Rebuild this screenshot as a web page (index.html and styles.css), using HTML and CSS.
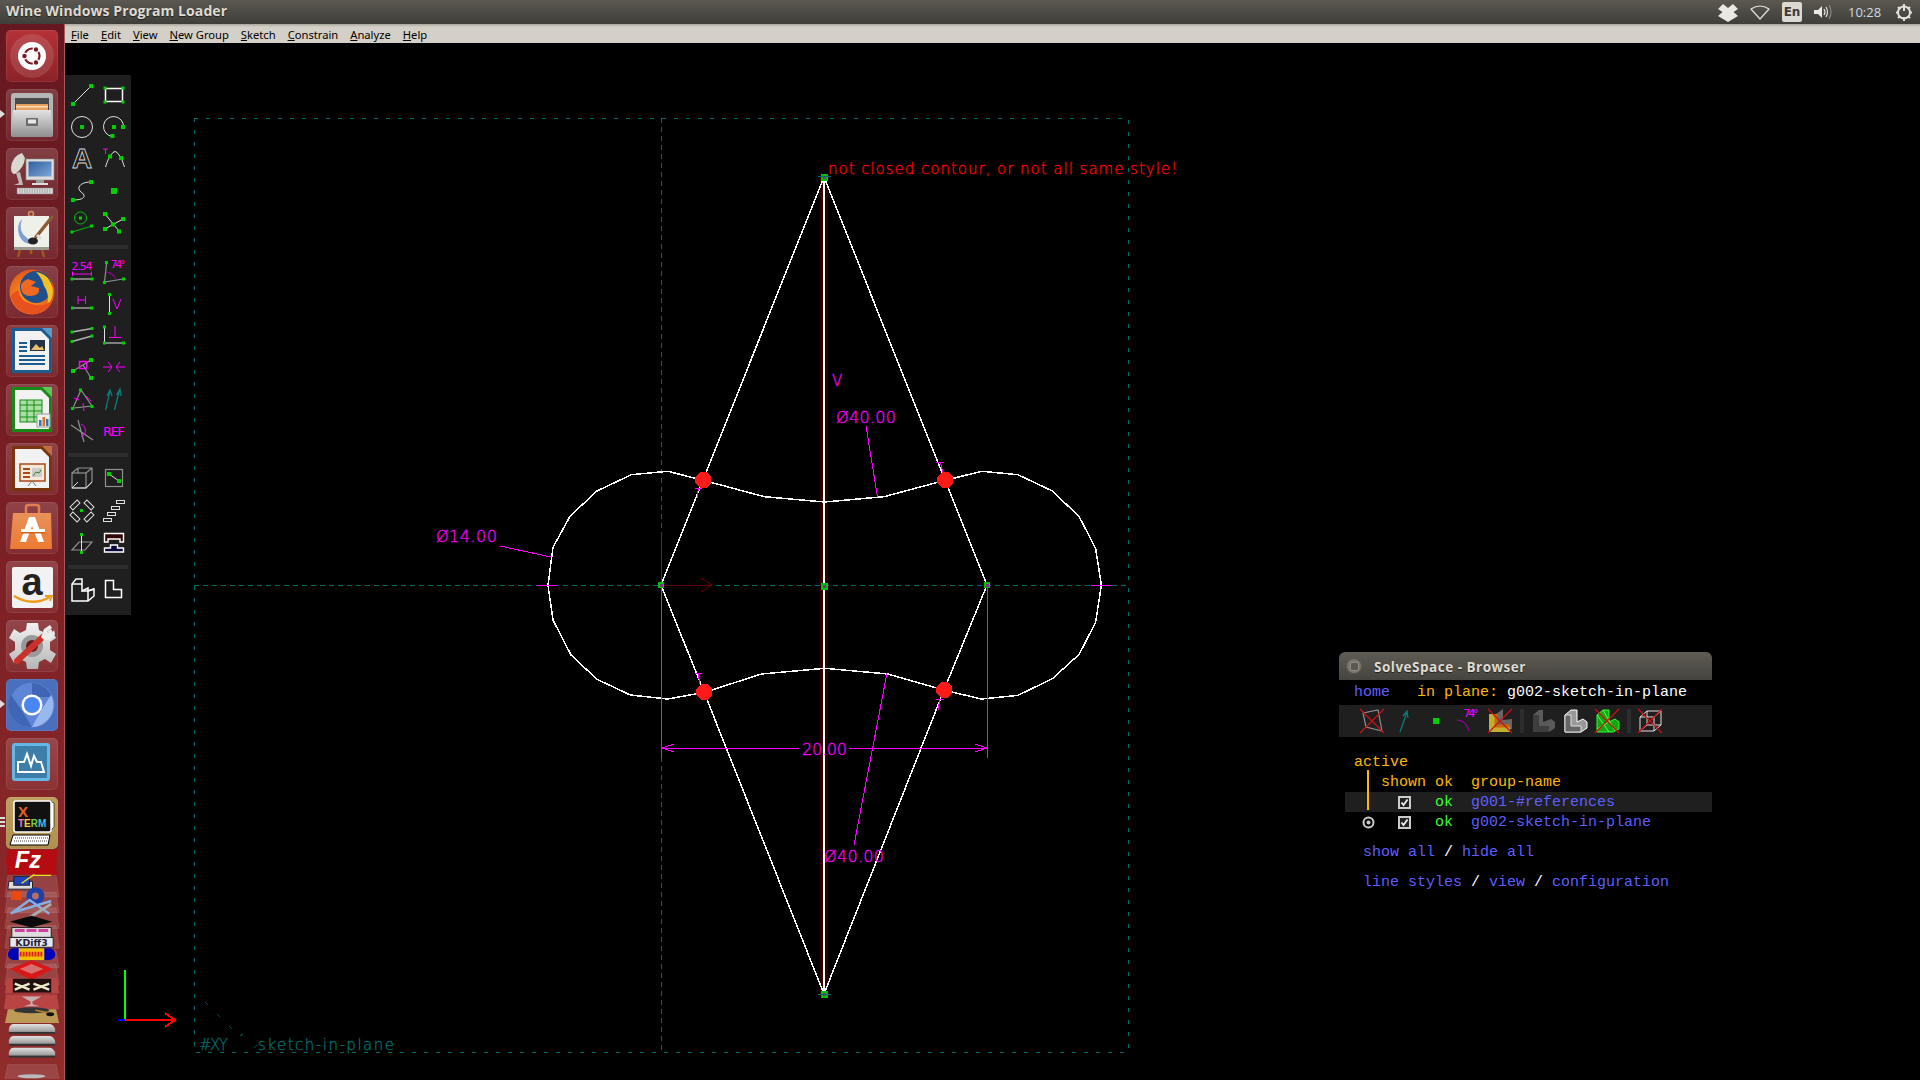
FILE: index.html
```html
<!DOCTYPE html>
<html lang="en">
<head>
<meta charset="utf-8">
<title>Wine Windows Program Loader</title>
<link rel="stylesheet" href="styles.css">
</head>
<body>
<svg class="defs" width="0" height="0" aria-hidden="true">
  <defs>
    <linearGradient id="metal" x1="0" y1="0" x2="0" y2="1"><stop offset="0" stop-color="#e2e2e2"/><stop offset="1" stop-color="#8f8f8f"/></linearGradient>
    <linearGradient id="bag" x1="0" y1="0" x2="0" y2="1"><stop offset="0" stop-color="#e8915a"/><stop offset="1" stop-color="#ee7a30"/></linearGradient>
    <linearGradient id="screen" x1="0" y1="0" x2="1" y2="1"><stop offset="0" stop-color="#2f5f9f"/><stop offset="1" stop-color="#7fa8d8"/></linearGradient>
    <linearGradient id="gear" x1="0" y1="0" x2="0" y2="1"><stop offset="0" stop-color="#f2f2f2"/><stop offset="1" stop-color="#b5b5b5"/></linearGradient>
    <radialGradient id="fox" cx=".4" cy=".6" r=".7"><stop offset="0" stop-color="#f7a020"/><stop offset="1" stop-color="#e0481c"/></radialGradient>
  </defs>
</svg>

<header class="topbar">
  <div class="wintitle">Wine Windows Program Loader</div>
  <div class="tray">
    <svg class="tray-ico" viewBox="0 0 20 20"><path class="t-fill" d="M5 2 10 6 15 2 20 7 15.500 10 20 14 15 17 10 20 5 17 0 14 4.500 10 0 7Z"/></svg>
    <svg class="tray-ico" viewBox="0 0 20 20"><path class="t-line" d="M1 7Q10 1 19 7L10 17Z"/></svg>
    <div class="lang">En</div>
    <svg class="tray-ico" viewBox="0 0 20 20"><path class="t-fill" d="M1 8H5L9 4V16L5 12H1Z"/><path class="t-line" d="M11 7Q13 10 11 13M13 5Q16 10 13 15"/><path class="t-dim" d="M16 3Q20 10 16 17"/></svg>
    <div class="clock">10:28</div>
    <svg class="tray-ico" viewBox="0 0 20 20"><circle class="t-thick" cx="10" cy="10.500" r="6"/><path class="t-thick" d="M10 2V9M10 15V19M2 10.500H5M15 10.500H18M4 5 6 7M16 5 14 7M4 16 6 14M16 16 14 14"/></svg>
  </div>
</header>

<div class="desktop">
  <nav class="launcher">
    <div class="tile tile-ubuntu">
      <svg viewBox="0 0 52 52"><circle cx="26" cy="26" r="22" class="swirl"/><circle cx="26" cy="26" r="14" fill="#fff"/><circle cx="26" cy="26" r="7.500" fill="none" stroke="#7a1a22" stroke-width="2.200"/><circle class="ub-dot" cx="18.500" cy="26" r="2.800"/><circle class="ub-dot" cx="30" cy="19.500" r="2.800"/><circle class="ub-dot" cx="30" cy="32.500" r="2.800"/></svg>
    </div>
    <div class="tile pip">
      <svg viewBox="0 0 52 52"><path d="M5 7Q5 4 8 4H44Q47 4 47 7V47H5Z" fill="#b5b5b5"/><rect x="9" y="9" width="34" height="12" fill="#4a4a4a"/><rect x="10" y="15" width="32" height="7" fill="#e8a060"/><rect x="10" y="17" width="32" height="1.500" fill="#f6e0b0"/><path d="M7 21H45L47 47Q47 48 44 48H8Q5 48 5 47Z" fill="url(#metal)"/><rect x="20" y="29" width="12" height="8" rx="1" fill="#6a6a6a"/><rect x="22" y="30.500" width="8" height="4" fill="#e8e8e8"/></svg>
    </div>
    <div class="tile">
      <svg viewBox="0 0 52 52"><rect x="20" y="11" width="28" height="21" fill="#dcdcdc" stroke="#888" stroke-width=".6"/><rect x="22.500" y="13.500" width="23" height="15" fill="url(#screen)"/><rect x="30" y="32" width="8" height="3" fill="#999"/><rect x="26" y="35" width="16" height="2" fill="#ddd"/><path d="M16 5Q6 8 5 20 5 26 9 26 18 20 19 10Z" fill="#d8d8d0"/><path d="M10 25 13 35 8 37H17L14 24Z" fill="#bbb"/><rect x="11" y="40" width="36" height="6" fill="#ddd" stroke="#777" stroke-width=".6"/><path d="M13 42H45M13 44H45" stroke="#777" stroke-width=".8" stroke-dasharray="1.500 1"/></svg>
    </div>
    <div class="tile">
      <svg viewBox="0 0 52 52"><circle cx="25" cy="7" r="2.500" fill="none" stroke="#d89060" stroke-width="1.500"/><path d="M14 43 12 50M36 43 38 50M25 43V47" stroke="#a05a20" stroke-width="2.500"/><rect x="8" y="9" width="35" height="34" fill="#f0f0ea"/><rect x="8" y="40" width="35" height="3" fill="#9a9a90"/><path d="M16 12Q12 24 20 30 26 36 28 37 17 38 13 28 10 18 16 12Z" fill="#7fa0d0"/><path d="M46 10 30 30" stroke="#8a5a30" stroke-width="3.500" stroke-linecap="round"/><path d="M31 28 35 32" stroke="#ddd" stroke-width="3"/><ellipse cx="27" cy="34" rx="5" ry="3.500" fill="#222"/></svg>
    </div>
    <div class="tile">
      <svg viewBox="0 0 52 52"><circle cx="26" cy="26" r="22.500" fill="url(#fox)"/><circle cx="30" cy="21" r="16" fill="#1f4f8c"/><path d="M30 6Q44 8 47 24 47 34 41 40 44 28 38 20 36 12 30 6Z" fill="#f6c020"/><path d="M22 13 30 16 25 20 33 22Q34 30 24 30 16 30 15 22 14 16 22 13Z" fill="#ef6a20"/><path d="M5 30Q8 46 26 48 40 48 46 34 38 42 26 38 14 36 12 24 8 26 5 30Z" fill="#e8501e"/></svg>
    </div>
    <div class="tile">
      <svg viewBox="0 0 52 52"><path d="M6 3H46V48H6Z" fill="#1d5c8f"/><path d="M36 3H46V13Z" fill="#5b9cc8"/><path d="M9 6H35L43 14V45H9Z" fill="#f2f2f2"/><path d="M13 18H21M13 22H21M13 26H21M13 31H39M13 35H39M13 39H39" stroke="#1d5c8f" stroke-width="1.800"/><rect x="24" y="15" width="15" height="11" fill="#234"/><path d="M25 25 30 19 34 23 36 21 38 25Z" fill="#e8c070"/></svg>
    </div>
    <div class="tile">
      <svg viewBox="0 0 52 52"><path d="M6 3H46V48H6Z" fill="#188a18"/><path d="M36 3H46V13Z" fill="#63c35c"/><path d="M9 6H35L43 14V45H9Z" fill="#f2f2f2"/><rect x="14" y="16" width="22" height="22" fill="#a8e0a0" stroke="#188a18"/><path d="M14 21H36M14 27H36M14 33H36M21 16V38M28 16V38" stroke="#188a18"/><rect x="31" y="30" width="13" height="13" fill="#eee" stroke="#999"/><rect x="33" y="36" width="2.500" height="6" fill="#2a7ac0"/><rect x="36.500" y="33" width="2.500" height="9" fill="#e87020"/><rect x="40" y="35" width="2.500" height="7" fill="#2a7ac0"/></svg>
    </div>
    <div class="tile">
      <svg viewBox="0 0 52 52"><path d="M6 3H46V48H6Z" fill="#7a3410"/><path d="M36 3H46V13Z" fill="#c07040"/><path d="M9 6H35L43 14V45H9Z" fill="#f2f2f2"/><rect x="14" y="21" width="25" height="17" fill="#f8e8d8" stroke="#a84a18" stroke-width="1.500"/><path d="M17 26H24M17 30H24M17 34H24" stroke="#a84a18" stroke-width="1.800"/><rect x="26" y="25" width="10" height="9" fill="#ccc"/><path d="M27 33 30 29 33 30 35 27" stroke="#2a8a2a" fill="none"/><path d="M26 38 22 43M26 38 30 43" stroke="#777"/></svg>
    </div>
    <div class="tile">
      <svg viewBox="0 0 52 52"><path d="M20 12V5Q20 3 23 3H30Q33 3 33 5V12" fill="none" stroke="#e08050" stroke-width="2.500"/><path d="M8 11H46L47 47H5Z" transform="translate(-1 0)" fill="url(#bag)"/><path d="M26 15 23 15 14 40H20L26 24 32 40H38L29 15Z" fill="#fff"/><rect x="15" y="27" width="24" height="3" fill="#fff"/><rect x="15" y="30" width="24" height="1.500" fill="#d06020"/></svg>
    </div>
    <div class="tile">
      <svg viewBox="0 0 52 52"><rect x="6" y="6" width="41" height="41" rx="2" fill="#f2f2f2"/><text class="amz" x="26" y="34">a</text><path d="M8 35Q26 46 44 36" fill="none" stroke="#f09a1c" stroke-width="2.500"/><path d="M39 35 46 35 44 40" fill="none" stroke="#f09a1c" stroke-width="1.800"/></svg>
    </div>
    <div class="tile">
      <svg viewBox="0 0 52 52"><path d="M21 3H32L33 10 39 13 45 9 50 18 44 22V30L50 34 45 43 39 39 33 42 32 49H21L20 42 14 39 8 43 3 34 9 30V22L3 18 8 9 14 13 20 10Z" fill="url(#gear)"/><circle cx="26" cy="26" r="11" fill="#999"/><circle cx="26" cy="26" r="6" fill="#70191f"/><path d="M11 41 40 14" stroke="#c8322a" stroke-width="6" stroke-linecap="round"/><path d="M35 17 38 9 44 5 46 8 41 12 46 13 48 10 49 14 44 20 38 20Z" fill="#ececec"/></svg>
    </div>
    <div class="tile tile-chrome pip">
      <svg viewBox="0 0 52 52"><circle cx="26" cy="26" r="22.500" fill="#5f86d6"/><path d="M26 4A22 22 0 0 1 46 18H26Z" fill="#3f66b4"/><path d="M45 16A22 22 0 0 1 26 48L36 30Z" fill="#9ab8f0"/><path d="M16 32 5 16A22 22 0 0 0 26 48Z" fill="#3f66b4"/><circle cx="26" cy="26" r="10.500" fill="#fff"/><circle cx="26" cy="26" r="8" fill="#4a86f0"/></svg>
    </div>
    <div class="tile">
      <svg viewBox="0 0 52 52"><rect x="6" y="5" width="38" height="38" rx="3" fill="#65b8e6"/><rect x="9" y="8" width="32" height="32" fill="#3d7ea8"/><path d="M12 24 18 24 21 16 25 28 28 18 31 24 35 24 38 34H12Z" fill="none" stroke="#fff" stroke-width="2"/></svg>
    </div>
    <div class="tile tile-xterm pips">
      <svg viewBox="0 0 52 52"><path d="M44 4 48 6V30L44 34Z" fill="#fff" stroke="#000" stroke-width=".6"/><rect x="8" y="4" width="37" height="31" rx="2" fill="#111" stroke="#fff" stroke-width="1.500"/><text class="xt-x" x="12" y="20">X</text><text class="xt-term" x="12" y="30"><tspan fill="#ff70c0">T</tspan><tspan fill="#f0d040">E</tspan><tspan fill="#70d040">R</tspan><tspan fill="#40c0e0">M</tspan></text><path d="M7 38H44L42 48H4Z" fill="#fff" stroke="#000"/><path d="M9 41H42M8 44H41" stroke="#444" stroke-dasharray="1 1"/></svg>
    </div>
    <svg class="stack" viewBox="0 848 65 232">
      <path class="fold" d="M8 874 H57 L60 896 H5Z"/>
      <path class="fold" d="M8 891 H57 L60 912 H5Z"/>
      <path class="fold" d="M8 907 H57 L60 928 H5Z"/>
      <path class="fold" d="M8 925 H57 L60 948 H5Z"/>
      <path class="fold" d="M8 950 H57 L60 968 H5Z"/>
      <path class="fold" d="M8 964 H57 L60 985 H5Z"/>
      <path class="fold-hot" d="M7 978 H58 L60 994 H5Z"/>
      <path class="fold-hot" d="M6 995 H58 L60 1010 H4Z"/>
      <path class="fold-tan" d="M8 1010 H57 L60 1024 H5Z"/>
      <path d="M8 848H58L57 870 60 873 6 873 8 870 6 860Z" fill="#b40c10"/>
      <text class="fz" x="15" y="867">Fz</text>
      <path d="M9 880H33V888H8Z" fill="#ddd" stroke="#222"/><rect x="14" y="875" width="16" height="9" fill="#2442b8" stroke="#222"/><path d="M22 882 35 873M34 874H52" stroke="#e8e020" stroke-width="1.500"/>
      <path d="M12 890H22V899H11Z" fill="#e84a10"/><circle cx="36" cy="895" r="9" fill="#1c3fa8"/><circle cx="36" cy="895" r="3.500" fill="#b07070"/>
      <path d="M11 913 30 899 50 913M12 912 52 900" fill="none" stroke="#88aee0" stroke-width="2.500"/><path d="M28 918 52 903" stroke="#aaa" stroke-width="3"/>
      <path d="M10 921 32 915 53 921 32 927Z" fill="#0a0a0a"/>
      <rect x="12" y="927" width="40" height="10" fill="#ddd" stroke="#222"/><path d="M15 930H25M27 930H37M39 930H49" stroke="#d040a0" stroke-width="3"/>
      <rect x="10" y="937" width="44" height="10" fill="#e8e8f4" stroke="#222"/>
      <text class="kd" x="32" y="945.500">KDiff3</text>
      <rect x="8" y="948" width="48" height="12" rx="6" fill="#0000b8"/><rect x="19" y="948" width="26" height="12" fill="#f0c000"/><path d="M20 954H44" stroke="#e02020" stroke-width="5" stroke-dasharray="2 1"/>
      <path d="M10 969 32 980 54 969 32 960Z" fill="#d81818"/><path d="M20 969 32 974 44 969 32 964Z" fill="#d87070"/>
      <rect x="13" y="979" width="39" height="14" fill="#201010"/><path d="M15 984 30 990M50 984 34 990M15 990 30 984M50 990 34 984" stroke="#eee8cc" stroke-width="2.500"/>
      <path d="M22 997H42L33 1002V1005L40 1007H24L31 1005V1002Z" fill="#c8b0b0"/>
      <ellipse cx="32" cy="1011" rx="18" ry="3" fill="#333"/><path d="M36 1011 52 1014" stroke="#b08030" stroke-width="1.500"/><ellipse cx="51" cy="1015" rx="4" ry="2" fill="#111"/>
      <path d="M9 1030Q10 1025 14 1025H50Q54 1025 56 1030V1034H9Z" fill="url(#metal)"/><rect x="9" y="1033" width="47" height="2" fill="#333"/>
      <path d="M9 1042Q10 1037 14 1037H50Q54 1037 56 1042V1046H9Z" fill="url(#metal)"/><rect x="9" y="1045" width="47" height="2" fill="#333"/>
      <path d="M9 1054Q10 1049 14 1049H50Q54 1049 56 1054V1058H9Z" fill="url(#metal)"/><rect x="9" y="1057" width="47" height="2" fill="#333"/>
      <path d="M8 1066H57L60 1080H5Z" class="fold"/><ellipse cx="32" cy="1078" rx="14" ry="2" fill="#bbb"/>
    </svg>
  </nav>

  <main class="app">
    <div class="menubar">
      <span class="menu"><u>F</u>ile</span>
      <span class="menu"><u>E</u>dit</span>
      <span class="menu"><u>V</u>iew</span>
      <span class="menu"><u>N</u>ew Group</span>
      <span class="menu"><u>S</u>ketch</span>
      <span class="menu"><u>C</u>onstrain</span>
      <span class="menu"><u>A</u>nalyze</span>
      <span class="menu"><u>H</u>elp</span>
    </div>
    <div class="canvas">
      <svg class="sketch" viewBox="65 43 1855 1037" preserveAspectRatio="none">
        <g class="crisp">
          <path class="frame" d="M194 118H1128V1052H194Z"/>
          <path class="axis" d="M194 585H1128M661 118V1052"/>
          <path class="dim-red" d="M661 585H712M701 578 712 585 701 592"/>
          <path class="dim-green" d="M661 533V585"/>
          <path class="faint" d="M205 1002 208 1005M217 1014 220 1017M229 1026 232 1029M240 1036 243 1034M254 1048 257 1045"/>
          <rect class="ref-band" x="820" y="177" width="8" height="817"/>
          <path class="edge" d="M824 177V994"/>
          <path class="edge" d="M824 177 703 480 661 585 704 692 824 994 944 690 987 585 945 480Z"/>
          <path class="edge" d="M703.400 480.300 667.800 471.300 631.400 474.700 597 491 570.200 516 553 547.300 548 585.300 553 620 571 655 597 679.300 630.300 695 667.800 699 704.500 692.300 761.500 674 824.700 668.300 887.800 674 944.500 690.300 981.600 699 1018 695.300 1052.400 678.700 1079.200 654.300 1095.600 622.300 1101.400 585.300 1095.600 548.300 1079.200 516.700 1052.400 491 1018 474.700 981.600 471.300 945.200 480.300 884 496.700 824.700 502 764.200 496.700Z"/>
          <path class="mag" d="M866 426 877.500 497M500 546 551 557M537 585H557M1091 585H1112M661 586V758M987 586V758M662 748H799M849 748H987M674 744 662 748 674 752M975 744 987 748 975 752M887 673 854 845"/>
          <path class="mag" d="M698.400 488 697 498M695 488H702M940 462 943 472M936 462H944M698 673 700 684M695 673H702M940 699 938 710M936 699H944"/>
          <g class="pt-red">
            <path d="M700 472H706L711 477V483L706 488H700L695 483V477Z"/>
            <path d="M942 472H948L953 477V483L948 488H942L937 483V477Z"/>
            <path d="M701 684H707L712 689V695L707 700H701L696 695V689Z"/>
            <path d="M941 682H947L952 687V693L947 698H941L936 693V687Z"/>
          </g>
          <g class="pt-green">
            <rect x="820.500" y="173.500" width="7" height="7"/>
            <rect x="821" y="583" width="7" height="7"/>
            <rect x="658" y="582" width="6" height="6"/>
            <rect x="984" y="582" width="6" height="6"/>
            <rect x="821" y="991" width="7" height="7"/>
          </g>
          <g class="pt-mid">
            <rect x="822.500" y="175.500" width="3" height="3"/>
            <rect x="823" y="585" width="3" height="3"/>
            <rect x="659.500" y="583.500" width="3" height="3"/>
            <rect x="985.500" y="583.500" width="3" height="3"/>
            <rect x="822.500" y="992.500" width="3" height="3"/>
          </g>
          <path class="axis-solid" d="M818 176H831M818 994H831"/>
          <path class="tri-g" d="M125 970V1020"/>
          <path class="tri-b" d="M118 1020H125"/>
          <path class="tri-r" d="M125 1020H175M165 1013 175 1020 165 1027"/>
        </g>
        <text class="cad cad-red" x="828" y="174" textLength="349">not closed contour, or not all same style!</text>
        <text class="cad cad-mag" x="836" y="423" textLength="60">Ø40.00</text>
        <text class="cad cad-mag" x="436" y="542" textLength="61">Ø14.00</text>
        <text class="cad cad-mag" x="802" y="755" textLength="45">20.00</text>
        <text class="cad cad-mag" x="824" y="862" textLength="60">Ø40.00</text>
        <text class="cad cad-mag cad-small" x="832" y="386">V</text>
        <text class="cad cad-faint" x="199" y="1050" textLength="29">#XY</text>
        <text class="cad cad-faint" x="258" y="1050" textLength="136">sketch-in-plane</text>
      </svg>

      <aside class="toolbar">
        <div class="tgroup">
          <div class="tool"><svg viewBox="0 0 32 32"><path class="w" d="M7 25 25 7"/><rect class="gp" x="5" y="23" width="4" height="4"/><rect class="gp" x="23" y="5" width="4" height="4"/></svg></div>
          <div class="tool"><svg viewBox="0 0 32 32"><rect class="w2" x="7.500" y="9.500" width="17" height="13"/><rect class="gp" x="5.500" y="7.500" width="3" height="3"/><rect class="gp" x="23.500" y="7.500" width="3" height="3"/><rect class="gp" x="5.500" y="21.500" width="3" height="3"/><rect class="gp" x="23.500" y="21.500" width="3" height="3"/></svg></div>
          <div class="tool"><svg viewBox="0 0 32 32"><circle class="w" cx="16" cy="16" r="10.500"/><rect class="gp" x="14" y="14" width="4" height="4"/></svg></div>
          <div class="tool"><svg viewBox="0 0 32 32"><path class="w" d="M25.500 16A10 10 0 1 0 14.500 25.500"/><rect class="gp" x="14" y="14" width="4" height="4"/><rect class="gp" x="23" y="14" width="4" height="4"/><rect class="gp" x="12.500" y="23" width="4" height="4"/></svg></div>
          <div class="tool"><svg viewBox="0 0 32 32"><text class="ico-a" x="16" y="25">A</text></svg></div>
          <div class="tool"><svg viewBox="0 0 32 32"><path class="w" d="M7.500 24Q11 13 13 12 17 5 21 12 24 15 26.500 24"/><rect class="gp" x="10" y="11.500" width="4" height="4"/><rect class="gp" x="21" y="13" width="4" height="4"/><path class="m" d="M5 6H10M7.500 6V11"/></svg></div>
          <div class="tool"><svg viewBox="0 0 32 32"><path class="w" d="M7 25C20 25 20 20 15 17 10 13 14 7 25 7"/><rect class="gp" x="5" y="23" width="4" height="4"/><rect class="gp" x="23" y="5" width="4" height="4"/></svg></div>
          <div class="tool"><svg viewBox="0 0 32 32"><rect class="gp" x="13" y="13" width="6" height="6"/></svg></div>
          <div class="tool"><svg viewBox="0 0 32 32"><circle class="g" cx="14.500" cy="11" r="6"/><rect class="gp" x="13" y="9.500" width="3" height="3"/><path class="g" d="M6 25 26 19"/><rect class="gp" x="4.500" y="23.500" width="3" height="3"/><rect class="gp" x="24" y="17.500" width="3" height="3"/></svg></div>
          <div class="tool"><svg viewBox="0 0 32 32"><path class="w" d="M7 7 21 24M25 12 7 22"/><rect class="gp" x="5" y="5" width="4" height="4"/><rect class="gp" x="23" y="10" width="4" height="4"/><rect class="gp" x="5" y="20" width="4" height="4"/><rect class="gp" x="19" y="22.500" width="4" height="4"/><rect class="gp" x="13" y="15.500" width="4" height="4"/></svg></div>
        </div>
        <div class="tsep"></div>
        <div class="tgroup">
          <div class="tool"><svg viewBox="0 0 32 32"><text class="ico-t" x="16" y="15" textLength="21">2.54</text><path class="m" d="M6.500 16.500V21M25.500 16.500V21M6.500 19H25.500"/><path class="w" d="M6.500 24H25.500"/><rect class="gp" x="4.500" y="22.500" width="3" height="3"/><rect class="gp" x="24.500" y="22.500" width="3" height="3"/></svg></div>
          <div class="tool"><svg viewBox="0 0 32 32"><text class="ico-t" x="20" y="13" textLength="15">74°</text><path class="gl" d="M8.500 9 6.500 27 25 24"/><path class="m-dim" d="M7.500 17Q15 17 18 25"/><rect class="gp" x="7" y="6" width="3" height="3"/><rect class="gp" x="5" y="26" width="3" height="3"/><rect class="gp" x="24" y="22.500" width="3" height="3"/></svg></div>
          <div class="tool"><svg viewBox="0 0 32 32"><path class="m" d="M12 9V17M19.500 9V17M12 13H19.500"/><path class="w" d="M6.500 21H25.500"/><rect class="gp" x="5" y="19.500" width="3" height="3"/><rect class="gp" x="24" y="19.500" width="3" height="3"/></svg></div>
          <div class="tool"><svg viewBox="0 0 32 32"><path class="w" d="M11.500 7V27"/><path class="m" d="M15 12 19 22 23 12"/><rect class="gp" x="10" y="6" width="3" height="3"/><rect class="gp" x="10" y="25" width="3" height="3"/></svg></div>
          <div class="tool"><svg viewBox="0 0 32 32"><path class="gl2" d="M6 13 26 9.500M6 22.500 26 17"/><rect class="gp" x="4.500" y="11.500" width="3" height="3"/><rect class="gp" x="24.500" y="8" width="3" height="3"/><rect class="gp" x="4.500" y="21" width="3" height="3"/><rect class="gp" x="24.500" y="15.500" width="3" height="3"/></svg></div>
          <div class="tool"><svg viewBox="0 0 32 32"><path class="w" d="M6.500 8V24H25.500"/><path class="m" d="M11 18.500H23M17 18.500V7"/><rect class="gp" x="5" y="6.500" width="3" height="3"/><rect class="gp" x="5" y="22.500" width="3" height="3"/><rect class="gp" x="24" y="22.500" width="3" height="3"/></svg></div>
          <div class="tool"><svg viewBox="0 0 32 32"><path class="gl" d="M7 20 25 9M17 14 25 27"/><rect class="mb" x="13.500" y="10.500" width="7" height="7"/><rect class="gp" x="5" y="18" width="4" height="4"/><rect class="gp" x="23" y="7" width="4" height="4"/><rect class="gp" x="23" y="25" width="4" height="4"/></svg></div>
          <div class="tool"><svg viewBox="0 0 32 32"><path class="m" d="M5 16H13M10 11 14 16 10 21M27 16H19M22 11 18 16 22 21"/></svg></div>
          <div class="tool"><svg viewBox="0 0 32 32"><path class="gl" d="M15 7 7 25 26 23Z"/><path class="m" d="M8 15 13 17M20 13 25 18M17 20 18 28M10 17 12 14"/><rect class="gp" x="13" y="5.500" width="3" height="3"/><rect class="gp" x="5" y="24" width="3" height="3"/><rect class="gp" x="24.500" y="22" width="3" height="3"/></svg></div>
          <div class="tool"><svg viewBox="0 0 32 32"><path class="t" d="M7.500 27 12 8M9 13 12 7 14 13M16.500 27 21.500 7M18.500 12 22 6 23 13"/></svg></div>
          <div class="tool"><svg viewBox="0 0 32 32"><path class="gl" d="M5 10 27 25M12 5 18 27"/><path class="m" d="M15 9A7 7 0 0 1 15 22"/></svg></div>
          <div class="tool"><svg viewBox="0 0 32 32"><text class="ico-ref" x="16" y="21" textLength="22">REF</text></svg></div>
        </div>
        <div class="tsep tsep-2"></div>
        <div class="tgroup">
          <div class="tool"><svg viewBox="0 0 32 32"><path class="gl" d="M12 5H26V19M12 5V10M6 10 12 5M26 5 20 10M26 19 20 25"/><rect class="gl" x="6" y="10" width="14" height="15"/><path class="w" d="M6 25H20L26 19M12 19 6 25"/></svg></div>
          <div class="tool"><svg viewBox="0 0 32 32"><rect class="gl" x="7.500" y="6.500" width="17" height="17"/><path class="w" d="M11 11 21 18"/><rect class="gp" x="9" y="9" width="4" height="4"/><rect class="gp" x="19" y="16" width="4" height="4"/></svg></div>
          <div class="tool"><svg viewBox="0 0 32 32"><rect class="gp" x="14" y="14" width="3" height="3"/><g class="w"><rect x="4" y="8" width="10" height="4" transform="rotate(-45 9 10)"/><rect x="18" y="8" width="10" height="4" transform="rotate(45 23 10)"/><rect x="4" y="20" width="10" height="4" transform="rotate(45 9 22)"/><rect x="18" y="20" width="10" height="4" transform="rotate(-45 23 22)"/></g></svg></div>
          <div class="tool"><svg viewBox="0 0 32 32"><g class="w"><rect x="18.500" y="5.500" width="8" height="3"/><rect x="13.500" y="11.500" width="8" height="3"/><rect x="9.500" y="17.500" width="8" height="3"/><rect x="5.500" y="23.500" width="8" height="3"/></g></svg></div>
          <div class="tool"><svg viewBox="0 0 32 32"><path class="gl" d="M6 23 13 15H26L19 23Z"/><path class="w" d="M15.500 7V25"/><rect class="gp" x="14" y="6" width="3" height="3"/><rect class="gp" x="14" y="24" width="3" height="3"/></svg></div>
          <div class="tool"><svg viewBox="0 0 32 32"><path class="sec-a" d="M6.500 6.500H25.500V15H22V12H10V15H6.500Z"/><path class="sec-b" d="M12.500 18H19.500V21H25.500V25H6.500V21H12.500Z"/></svg></div>
        </div>
        <div class="tsep tsep-last"></div>
        <div class="tgroup">
          <div class="tool"><svg viewBox="0 0 32 32"><path class="w2" d="M6 10V27H22L28 22V15L22 17V14L16 17V5L10 5Z"/><path class="w2" d="M6 10H16M22 27V17M16 17H22L28 15"/></svg></div>
          <div class="tool"><svg viewBox="0 0 32 32"><path class="w2" d="M7.500 6.500H15.500V15.500H23.500V23.500H7.500Z"/></svg></div>
        </div>
      </aside>

      <section class="browser">
        <div class="b-title">
          <span class="b-close"><span class="b-close-in"></span></span>
          <span class="b-title-text">SolveSpace - Browser</span>
        </div>
        <div class="b-line b-head"><span class="lnk">home</span><span class="yel">   in plane: </span><span class="wht">g002-sketch-in-plane</span></div>
        <div class="b-icons">
          <svg class="b-ic" viewBox="0 0 32 32"><path class="gl" d="M7 8 22 5 26 26 10 22Z"/><path class="x" d="M4 4 28 28M28 4 4 28"/></svg>
          <svg class="b-ic" viewBox="0 0 32 32"><path class="t" d="M12 27 19 7M15 11 19 6 20 13"/></svg>
          <svg class="b-ic" viewBox="0 0 32 32"><rect class="gp" x="13" y="13" width="6" height="6"/></svg>
          <svg class="b-ic" viewBox="0 0 32 32"><text class="ico-t" x="19" y="12" textLength="15">74°</text><path class="m-dim" d="M5 15Q14 15 17 26"/></svg>
          <svg class="b-ic" viewBox="0 0 32 32"><path d="M12 9 19 4V15L28 14V24L20 27H5V9Z" fill="#666"/><path d="M5 9H12V21H26V27H5Z" fill="#c0b030"/><path d="M12 9V21H26" fill="none" stroke="#c86a00" stroke-width="3"/><path class="x" d="M4 4 28 28M28 4 4 28"/></svg>
          <span class="b-sep"></span>
          <svg class="b-ic" viewBox="0 0 32 32"><path d="M6 10 12 5H16V17L24 14 28 17V23L22 27H6Z" fill="#5a5a5a"/><path d="M6 10H12V21H22V27H6Z" fill="#3e3e3e"/></svg>
          <svg class="b-ic" viewBox="0 0 32 32"><path d="M6 10 12 5H18V17L24 14 28 17V23L22 27H6Z" fill="#999" stroke="#fff"/><path d="M6 10H12V21H22V27H6Z" fill="#666" stroke="#ddd"/></svg>
          <svg class="b-ic" viewBox="0 0 32 32"><path d="M6 10 12 5H18V17L24 14 28 17V24L22 27H6Z" fill="#13a813" stroke="#3f3"/><path d="M6 10 18 27M12 5 24 26M18 17 6 24" stroke="#5f5" fill="none"/><path class="x" d="M4 4 28 28M28 4 4 28"/></svg>
          <span class="b-sep"></span>
          <svg class="b-ic" viewBox="0 0 32 32"><path class="w" d="M13 6H27V20H13ZM6 12H20V26H6ZM6 12 13 6M20 12 27 6M20 26 27 20M6 26 13 20"/><path class="x" d="M4 4 28 28M28 4 4 28"/></svg>
        </div>
        <div class="b-list">
          <div class="b-line yel">active</div>
          <div class="b-row"><span class="c-act"><span class="rail"></span></span><span class="c-shown yel">shown</span><span class="c-ok yel">ok</span><span class="yel">group-name</span></div>
          <div class="b-row b-row-hi"><span class="c-act"><span class="rail"></span></span><span class="c-shown"><svg class="chk" viewBox="0 0 13 13"><rect class="chk-box" x="1" y="1" width="11" height="11"/><path class="chk-tick" d="M3.500 6.500 5.500 9 9.500 3.500"/></svg></span><span class="c-ok grn">ok</span><span class="lnk">g001-#references</span></div>
          <div class="b-row"><span class="c-act"><svg class="rad" viewBox="0 0 13 13"><circle class="rad-ring" cx="6.500" cy="6.500" r="5"/><circle class="rad-dot" cx="6.500" cy="6.500" r="2"/></svg></span><span class="c-shown"><svg class="chk" viewBox="0 0 13 13"><rect class="chk-box" x="1" y="1" width="11" height="11"/><path class="chk-tick" d="M3.500 6.500 5.500 9 9.500 3.500"/></svg></span><span class="c-ok grn">ok</span><span class="lnk">g002-sketch-in-plane</span></div>
          <div class="b-line b-links"><span class="lnk"> show all</span><span class="wht"> / </span><span class="lnk">hide all</span></div>
          <div class="b-line b-links"><span class="lnk"> line styles</span><span class="wht"> / </span><span class="lnk">view</span><span class="wht"> / </span><span class="lnk">configuration</span></div>
        </div>
      </section>
    </div>
  </main>
</div>
</body>
</html>
```
FILE: styles.css
```css
* { box-sizing: border-box; }
html, body { margin: 0; height: 100%; background: #000; overflow: hidden; }
body { display: flex; flex-direction: column; width: 1920px; height: 1080px; }
.defs { position: absolute; }

/* top panel */
.topbar { height: 24px; flex: none; display: flex; align-items: center; justify-content: space-between; background: linear-gradient(#5a5850, #3f3e39); padding: 0 6px; }
.wintitle { font: 700 14px/22px "Open Sans", sans-serif; height: 24px; letter-spacing: .1px; color: #dfdbd2; text-shadow: 0 1px 1px #222; }
.tray { display: flex; align-items: center; gap: 12px; }
.tray-ico { width: 20px; height: 20px; display: block; }
.t-fill { fill: #ece9e2; }
.t-line { fill: none; stroke: #e4e1da; stroke-width: 1.200; }
.t-dim { fill: none; stroke: #8a8880; stroke-width: 1.200; }
.t-thick { fill: none; stroke: #e4e1da; stroke-width: 2; }
.lang { width: 20px; height: 20px; background: #dcd9d2; border-radius: 2px; color: #3c3b37; font: 700 12px/20px "DejaVu Sans", sans-serif; text-align: center; margin-right: -1px; }
.clock { font: 13px "Open Sans", sans-serif; color: #cfd8e4; width: 35px; margin: 0 -1px 0 3px; }

/* layout */
.desktop { flex: 1; min-height: 0; display: flex; }
.launcher { width: 65px; flex: none; display: flex; flex-direction: column; gap: 7px; padding: 6px 0 0 6px; background: linear-gradient(#651820, #7a1f24 45%, #8f2c2c); border-right: 1px solid #a85a5a; overflow: hidden; position: relative; }
.tile { width: 52px; height: 52px; flex: none; border-radius: 5px; background: linear-gradient(rgba(255,255,255,.16), rgba(255,255,255,.06)); box-shadow: inset 0 0 0 1px rgba(255,255,255,.08); position: relative; }
.tile svg { display: block; width: 52px; height: 52px; }
.tile-ubuntu { background: linear-gradient(#b53238, #8a2228); }
.swirl { fill: rgba(255,255,255,.12); }
.ub-dot { fill: #7a1a22; stroke: #fff; stroke-width: 1.200; }
.tile-chrome { background: #4a6fbc; }
.tile-xterm { background: linear-gradient(#c0a060, #ae8f50); }
.pip::before { content: ""; position: absolute; left: -6px; top: 21px; border-left: 5px solid #ddd; border-top: 4px solid transparent; border-bottom: 4px solid transparent; }
.pips::before { content: ""; position: absolute; left: -6px; top: 20px; width: 5px; height: 10px; background: repeating-linear-gradient(#ddd 0 2px, transparent 2px 4px); }
.stack { position: absolute; left: 0; top: 824px; width: 64px; height: 232px; }
.fold { fill: rgba(255,255,255,.12); stroke: rgba(255,255,255,.1); }
.fold-hot { fill: #b84444; }
.fold-tan { fill: #bd9a55; }
.fz { font: italic 700 24px "Liberation Sans", sans-serif; fill: #fff; }
.kd { font: 700 9.500px "DejaVu Sans", sans-serif; fill: #223; text-anchor: middle; }
.amz { font: 700 38px "Liberation Sans", sans-serif; fill: #222; text-anchor: middle; }
.xt-x { font: 700 15px "Liberation Sans", sans-serif; fill: #e8601c; }
.xt-term { font: 700 10px "Liberation Sans", sans-serif; }

/* app window */
.app { flex: 1; min-width: 0; display: flex; flex-direction: column; }
.menubar { height: 19px; flex: none; display: flex; align-items: center; gap: 12px; padding: 1px 0 0 6px; background: linear-gradient(#a9a69e, #d4d0c8 3px); font: 11.200px "Noto Sans", sans-serif; color: #000; }
.canvas { flex: 1; min-height: 0; background: #000; position: relative; }
.sketch { position: absolute; inset: 0; width: 100%; height: 100%; display: block; }

/* sketch */
.crisp { shape-rendering: crispEdges; }
.crisp path { fill: none; }
.frame { stroke: #006a6a; stroke-dasharray: 4 8; }
.axis { stroke: #006a6a; stroke-dasharray: 5 4; }
.axis-solid { stroke: #006a6a; }
.dim-red { stroke: #600000; }
.dim-green { stroke: #006000; }
.faint { stroke: #005050; }
.ref-band { fill: #300000; }
.edge { stroke: #fff; stroke-width: 1.500; }
.mag { stroke: #ff00ff; stroke-width: 1; }
.pt-red path { fill: #ff1a1a; }
.pt-green rect { fill: #00c000; }
.pt-mid rect { fill: #8a2a9a; }
.tri-g { stroke: #00ff00; stroke-width: 2; }
.tri-b { stroke: #0000ff; stroke-width: 2; }
.tri-r { stroke: #ff0000; stroke-width: 2; }
.cad { font: 200 16px "DejaVu Sans", sans-serif; stroke-width: .3px; }
.cad-red { fill: #ff0000; stroke: #ff0000; font-size: 15px; }
.cad-mag { fill: #ff00ff; stroke: #ff00ff; }
.cad-small { font-size: 15px; }
.cad-faint { fill: #007070; stroke: #007070; font-size: 15px; }

/* left toolbar */
.toolbar { position: absolute; left: 0; top: 32px; width: 66px; padding: 4px 1px 9px; background: #1f1f1f; }
.tgroup { display: grid; grid-template-columns: 32px 32px; grid-auto-rows: 32px; }
.tool svg { display: block; width: 32px; height: 32px; }
.tsep { height: 4px; margin: 6px 2px 6px; background: #2d2d2d; }
.tsep-2 { margin: 6px 2px 6px; }
.tsep-last { margin: 6px 2px 5px; }
.tool .gp, .b-ic .gp { fill: #00d000; stroke: none; }
.w { stroke: #e0e0e0; fill: none; stroke-width: 1; }
.w2 { stroke: #fff; fill: none; stroke-width: 1.500; }
.g { stroke: #00c000; fill: none; stroke-width: 1; }
.m { stroke: #ff00ff; fill: none; stroke-width: 1; }
.mb { stroke: #ff00ff; fill: none; stroke-width: 1.500; }
.m-dim { stroke: #a000a0; fill: none; stroke-width: 1.200; }
.gl { stroke: #909090; fill: none; stroke-width: 1.200; }
.gl2 { stroke: #b0b0b0; fill: none; stroke-width: 1.500; }
.t { stroke: #0a7a7a; fill: none; stroke-width: 1.300; }
.x { stroke: #d01010; fill: none; stroke-width: 1.200; }
.sec-a { fill: #300808; stroke: #fff; stroke-width: 1.400; }
.sec-b { fill: #08083a; stroke: #fff; stroke-width: 1.400; }
.ico-a { font: 700 28px "Liberation Sans", sans-serif; fill: none; stroke: #d8d8d8; stroke-width: .8; text-anchor: middle; }
.ico-t { font: 11px "DejaVu Sans", sans-serif; fill: #ff00ff; text-anchor: middle; }
.ico-ref { font: 13px "DejaVu Sans", sans-serif; fill: #ff00ff; text-anchor: middle; }

/* browser window */
.browser { position: absolute; left: 1274px; top: 609px; width: 373px; background: #000; font: 15px/22px "Liberation Mono", monospace; }
.b-title { height: 28px; display: flex; align-items: center; gap: 12px; padding-left: 7px; border-radius: 6px 6px 0 0; background: linear-gradient(#5e5c54, #45443e); }
.b-close { width: 16px; height: 16px; border-radius: 50%; background: #7a7870; display: flex; align-items: center; justify-content: center; box-shadow: inset 0 0 0 1px #55534c; }
.b-close-in { width: 7px; height: 7px; border-radius: 1px; background: #5a5850; box-shadow: 0 0 0 1px #8e8c84; }
.b-title-text { font: 700 13.500px/30px "Open Sans", sans-serif; height: 28px; letter-spacing: .5px; color: #dfdbd2; text-shadow: 0 1px 1px #222; white-space: nowrap; }
.b-line { height: 20px; padding-left: 15px; white-space: pre; }
.b-head { height: 25px; line-height: 26px; }
.b-icons { height: 32px; display: flex; align-items: center; padding-left: 17px; background: #1f1f1f; }
.b-ic { width: 32px; height: 32px; flex: none; display: block; }
.b-sep { width: 4px; height: 24px; margin: 0 3px 0 4px; background: #2d2d2d; flex: none; }
.b-list { padding-top: 15px; }
.b-row { height: 20px; display: flex; padding-left: 15px; white-space: pre; }
.b-row-hi { margin-left: 6px; padding-left: 9px; background: #1f1f1f; }
.c-act { width: 27px; flex: none; display: block; }
.rail { display: block; width: 2px; height: 20px; margin: -2px 0 0 13px; background: #ffb800; }
.rad { display: block; width: 13px; height: 13px; margin: 4px 0 0 8px; }
.rad-ring { fill: none; stroke: #ccc; stroke-width: 2; }
.rad-dot { fill: #ccc; }
.c-shown { width: 54px; flex: none; display: block; }
.chk { display: block; width: 13px; height: 13px; margin: 4px 0 0 17px; }
.chk-box { fill: #222; stroke: #ccc; stroke-width: 2; }
.chk-tick { fill: none; stroke: #eee; stroke-width: 1.800; }
.c-ok { width: 36px; flex: none; }
.b-links { margin-top: 10px; }
.lnk { color: #5f5fff; }
.yel { color: #ffb800; }
.wht { color: #fff; }
.grn { color: #33ff33; }
```
